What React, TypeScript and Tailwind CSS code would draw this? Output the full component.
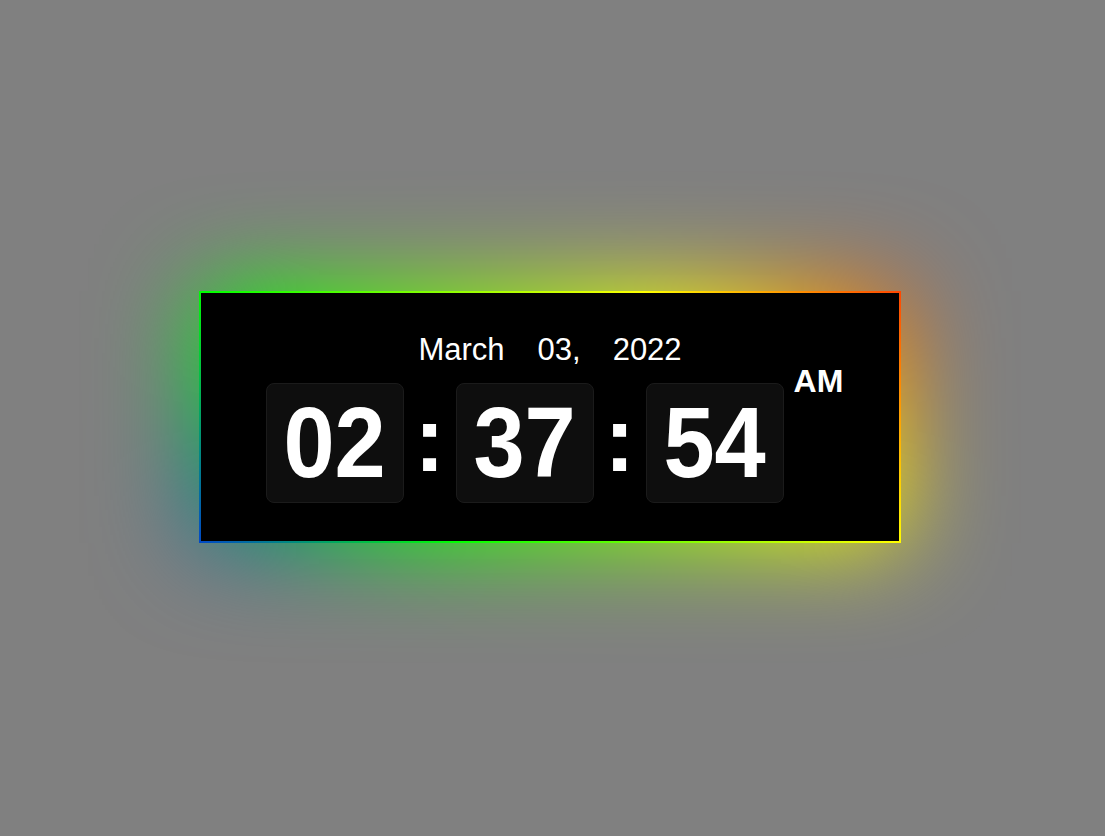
const rainbow =
  "bg-[linear-gradient(45deg,#0048c8_0%,#00ff00_27%,#ffff00_73%,#ff4500_100%)]";

function DigitBox({ value }: { value: string }) {
  return (
    <div className="w-[138px] h-[120px] rounded-lg bg-[#0e0e0e] border border-[#1b1b1b] flex items-center justify-center">
      <span className="text-[100px] font-bold leading-none text-white scale-x-[0.92] translate-y-[-1px]">
        {value}
      </span>
    </div>
  );
}

function Colon() {
  return (
    <div className="w-[52px] flex justify-center text-[92px] font-bold leading-none text-white -mt-[8px]">
      :
    </div>
  );
}

export default function App() {
  return (
    <div
      className="w-full h-screen bg-[#808080] flex items-center justify-center pr-[5px] pb-[2px] overflow-hidden"
      style={{ fontFamily: '"Liberation Sans", Arial, sans-serif' }}
    >
      <div className="relative w-[702px] h-[252px]">
        {/* glow */}
        <div className={`absolute inset-0 blur-[50px] ${rainbow}`} />

        <div className={`relative w-full h-full p-[2px] ${rainbow}`}>
          <div className="w-full h-full bg-black flex flex-col items-center pt-[41px]">
            <div className="flex text-[31px] leading-none text-white">
              <span>March</span>
              <span className="ml-[33px]">03,</span>
              <span className="ml-[32px]">2022</span>
            </div>

            <div className="flex items-center mt-[18px] pl-[9px]">
              <DigitBox value="02" />
              <Colon />
              <DigitBox value="37" />
              <Colon />
              <DigitBox value="54" />
              <span className="self-start -mt-[18px] ml-[10px] text-[32px] font-bold leading-none text-white">
                AM
              </span>
            </div>
          </div>
        </div>
      </div>
    </div>
  );
}
